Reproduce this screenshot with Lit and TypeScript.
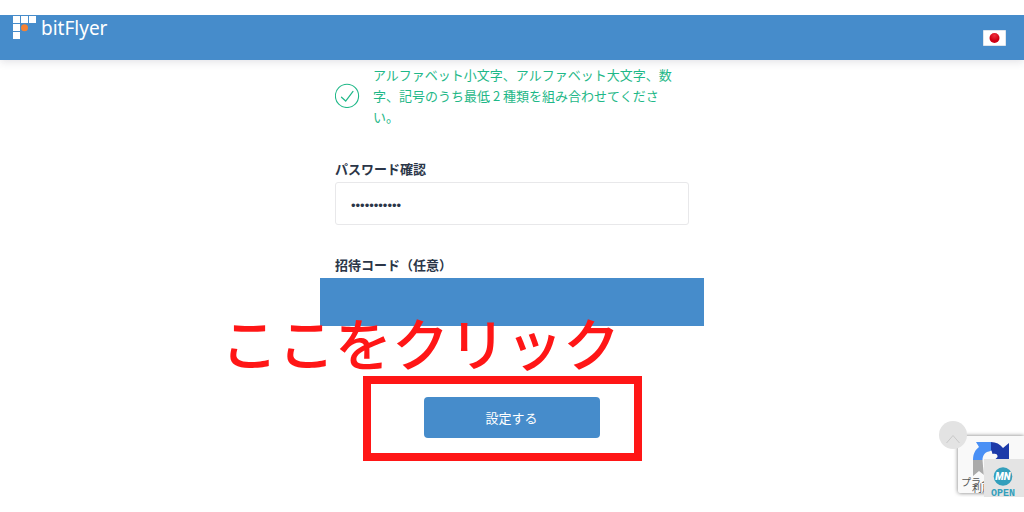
import { LitElement, html, css } from "lit";
import { customElement } from "lit/decorators.js";

@customElement("app-root")
export class AppRoot extends LitElement {
  static styles = css`
    :host {
      display: block;
      padding: 15px 0;
      background: #fff;
      color: #2b3648;
      font: 13px/21px "Noto Sans CJK JP", sans-serif;
    }
    * {
      box-sizing: border-box;
    }
    .screen {
      position: relative;
      overflow: hidden;
      padding-bottom: 36px;
    }
    .bar {
      display: flex;
      align-items: flex-start;
      justify-content: space-between;
      height: 45px;
      padding: 1px 18px 0 13px;
      background: #468ccb;
      box-shadow: 0 2px 8px rgba(60, 60, 90, 0.15);
    }
    .brand {
      display: flex;
      gap: 5px;
      color: #fff;
      text-decoration: none;
      font: 19px/24px "Noto Sans", sans-serif;
    }
    .lang {
      margin-top: 14px;
      padding: 0;
      border: 0;
      background: none;
      line-height: 0;
    }
    .form {
      position: relative;
      display: flex;
      flex-direction: column;
      width: 384px;
      max-width: 100%;
      margin: 0 auto;
      padding-top: 4px;
    }
    .rule {
      display: flex;
      align-items: center;
      gap: 13px;
      margin: 0 22px 31px 15px;
      color: #1fb888;
    }
    .rule p {
      margin: 0;
    }
    .rule svg {
      flex: none;
    }
    .label {
      padding: 0 15px 3px;
      font-weight: 700;
    }
    .field {
      height: 43px;
      margin: 0 15px 29px;
      padding: 3px 15px 0;
      border: 1px solid #e8e8ea;
      border-radius: 3px;
      background: #fff;
      color: #2b3648;
      font: 13px "Liberation Sans", sans-serif;
      outline: 0;
    }
    .code {
      height: 48px;
      padding: 0 15px;
      border: 0;
      border-radius: 0;
      background: #468ccb;
      color: #fff;
      font: inherit;
      outline: 0;
    }
    .frame {
      align-self: center;
      display: flex;
      margin: 50px 20px 0 0;
      padding: 13px 34px 15px 53px;
      border: 8px solid #ff1616;
    }
    .submit {
      width: 176px;
      height: 41px;
      padding: 0;
      border: 0;
      border-radius: 4px;
      background: #468ccb;
      color: #fff;
      font: inherit;
    }
    .callout {
      position: absolute;
      right: 84px;
      bottom: 78px;
      margin: 0;
      color: #ff1616;
      font-size: 57px;
      line-height: 84px;
      font-weight: 500;
      white-space: nowrap;
      pointer-events: none;
    }
    .captcha {
      position: absolute;
      right: 0;
      bottom: 4px;
      width: 66px;
      height: 57px;
      overflow: hidden;
      border-radius: 2px 0 0 2px;
      background: #f9f9f9;
      box-shadow: 0 0 4px #777;
      color: #555;
      font-size: 10px;
      line-height: 12px;
    }
    .captcha svg {
      position: absolute;
      left: 15px;
      top: 6px;
    }
    .privacy,
    .terms {
      position: absolute;
      white-space: nowrap;
    }
    .privacy {
      left: 3px;
      top: 40px;
    }
    .terms {
      left: 14px;
      top: 46px;
    }
    .open {
      position: absolute;
      right: 0;
      bottom: 0;
      display: flex;
      flex-direction: column;
      align-items: center;
      width: 40px;
      height: 38px;
      padding: 8px 2px 0 0;
      overflow: hidden;
      border: 0;
      background: #e4e4e4;
      color: #339fbc;
      font: 700 10px/11px "Liberation Sans Narrow", "Liberation Mono", sans-serif;
    }
    .open svg {
      flex: none;
    }
    .mark {
      font: italic 900 10px "Roboto", sans-serif;
    }
    .top {
      position: absolute;
      right: 57px;
      bottom: 48px;
      width: 28px;
      height: 28px;
      padding: 0;
      border: 0;
      border-radius: 50%;
      background: #e3e3e3;
      line-height: 0;
    }
  `;

  render() {
    return html`
      <div class="screen">
        <header class="bar">
          <a class="brand" href="#">
            <svg width="23" height="24" viewBox="0 0 23 24" aria-hidden="true">
              <path fill="#fff" d="M0 0h7v7H0zM8 0h7v7H8zM16 0h7v7h-7zM0 8h7v7H0zM0 16h7v7H0z" />
              <circle cx="11.5" cy="11.7" r="3.5" fill="#f58233" />
            </svg>
            <span>bitFlyer</span>
          </a>
          <button class="lang" aria-label="日本語">
            <svg width="23" height="16" viewBox="0 0 23 16">
              <defs>
                <radialGradient id="sun" cy="25%">
                  <stop offset="0" stop-color="#f0303c" />
                  <stop offset="1" stop-color="#cf0014" />
                </radialGradient>
              </defs>
              <path fill="#fff" stroke="#dfe5ec" d="M.5.5h22v15H.5z" />
              <circle cx="11.5" cy="8" r="5" fill="url(#sun)" />
            </svg>
          </button>
        </header>
        <form class="form" @submit=${(e: Event) => e.preventDefault()}>
          <div class="rule">
            <svg width="25" height="25" viewBox="0 0 25 25" fill="none" stroke="currentColor" aria-hidden="true">
              <circle cx="12" cy="12.900" r="11.600" stroke-width="1.1" />
              <path stroke-width="1.2" d="M6.500 14.200l4.200 3.800 7.300-9.600" stroke-linecap="round" />
            </svg>
            <p>アルファベット小文字、アルファベット大文字、数字、記号のうち最低 2 種類を組み合わせてください。</p>
          </div>
          <label class="label" for="confirm">パスワード確認</label>
          <input class="field" id="confirm" type="password" value="abcdefghijk" />
          <label class="label" for="invite">招待コード（任意）</label>
          <input class="code" id="invite" type="text" />
          <div class="frame"><button class="submit">設定する</button></div>
          <p class="callout">ここをクリック</p>
        </form>
        <aside class="captcha">
          <svg width="37" height="36" viewBox="0 0 37 36" aria-hidden="true">
            <path fill="#4a90f5" d="M18 0v18H0C0 12 2 8 6 5L3 0z" />
            <path fill="#1c3aa9" d="M18 0c5 0 9 2 12 6l6-5v17H18z" />
            <path fill="#ababab" d="M0 18h18v18l-7-3-5-4-6 5z" />
            <path fill="#f9f9f9" d="M9.500 18c0-5 3-8 6.500-8.500l2.500-1 1 3.500c3-1 5.500 0 5 3l-3 3v18H11z" />
          </svg>
          <span class="privacy">プライバシー</span>
          <span class="terms">利用規約</span>
        </aside>
        <button class="open">
          <svg width="22" height="21" viewBox="0 0 22 21" aria-hidden="true">
            <circle cx="11" cy="9.500" r="9.300" fill="#339fbc" />
            <text class="mark" x="11" y="13" text-anchor="middle" fill="#fff">MN</text>
          </svg>
          <span>OPEN</span>
        </button>
        <button class="top" aria-label="ページの先頭へ">
          <svg width="28" height="28" viewBox="0 0 28 28" fill="none" stroke="#c9c9c9">
            <path d="M7.500 22l6.500-7.500 6.500 7.500" />
          </svg>
        </button>
      </div>
    `;
  }
}
